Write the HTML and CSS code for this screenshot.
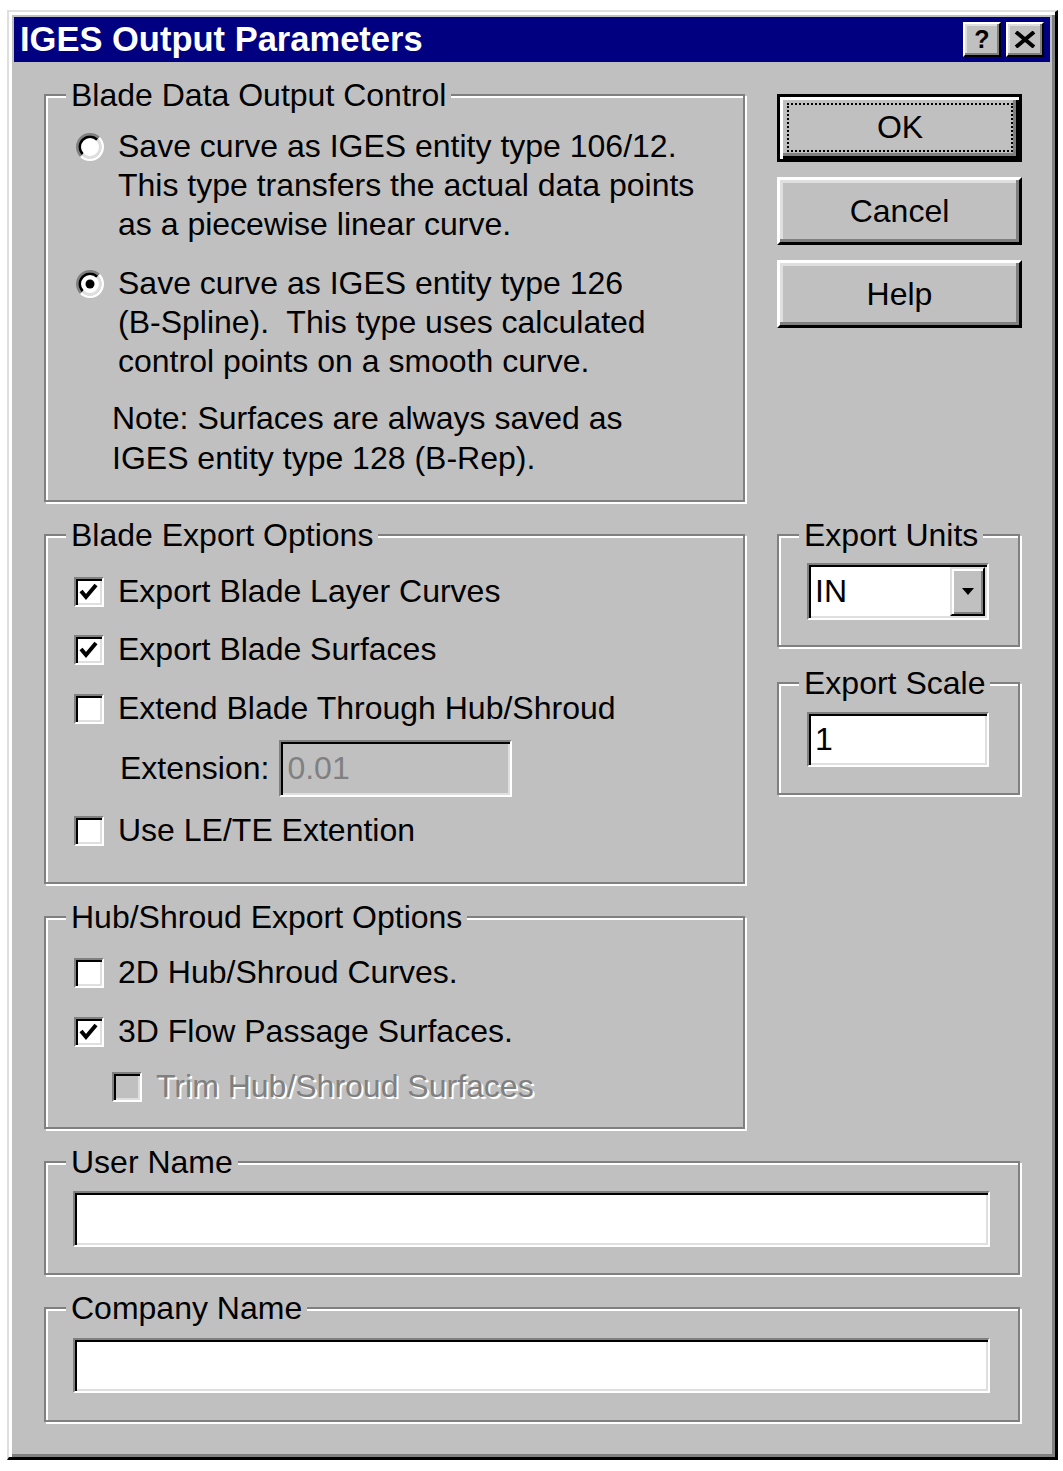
FILE: index.html
```html
<!DOCTYPE html>
<html>
<head>
<meta charset="utf-8">
<title>IGES Output Parameters</title>
<link rel="stylesheet" href="styles.css">
</head>
<body>
<div class="window">
  <div class="titlebar">
    <span class="title">IGES Output Parameters</span>
    <div class="cbtns">
      <div class="cbtn help-q">?</div>
      <div class="cbtn">
        <svg width="22" height="17" viewBox="0 0 22 17"><path d="M2 1 L20 16 M20 1 L2 16" stroke="#000" stroke-width="4" fill="none"/></svg>
      </div>
    </div>
  </div>

  <div class="dlg">
    <div class="top">
      <div class="leftcol">
        <fieldset class="group g1">
          <legend>Blade Data Output Control</legend>
          <div class="g1-content">
            <div class="radio">
              <svg class="rad" width="28" height="28" viewBox="0 0 28 28">
                <circle cx="14" cy="14" r="9.5" fill="#fff"/>
                <path d="M4.98 23.02 A12.75 12.75 0 0 1 23.02 4.98" stroke="#808080" stroke-width="2.5" fill="none"/>
                <path d="M23.02 4.98 A12.75 12.75 0 0 1 4.98 23.02" stroke="#fff" stroke-width="2.5" fill="none"/>
                <path d="M6.75 21.25 A10.25 10.25 0 0 1 21.25 6.75" stroke="#000" stroke-width="2.5" fill="none"/>
                <path d="M21.25 6.75 A10.25 10.25 0 0 1 6.75 21.25" stroke="#dfdfdf" stroke-width="2.5" fill="none"/>
              </svg>
              <span>Save curve as IGES entity type 106/12.<br>This type transfers the actual data points<br>as a piecewise linear curve.</span>
            </div>
            <div class="radio r2">
              <svg class="rad" width="28" height="28" viewBox="0 0 28 28">
                <circle cx="14" cy="14" r="9.5" fill="#fff"/>
                <path d="M4.98 23.02 A12.75 12.75 0 0 1 23.02 4.98" stroke="#808080" stroke-width="2.5" fill="none"/>
                <path d="M23.02 4.98 A12.75 12.75 0 0 1 4.98 23.02" stroke="#fff" stroke-width="2.5" fill="none"/>
                <path d="M6.75 21.25 A10.25 10.25 0 0 1 21.25 6.75" stroke="#000" stroke-width="2.5" fill="none"/>
                <path d="M21.25 6.75 A10.25 10.25 0 0 1 6.75 21.25" stroke="#dfdfdf" stroke-width="2.5" fill="none"/>
                <circle cx="14" cy="14" r="4.5" fill="#000"/>
              </svg>
              <span>Save curve as IGES entity type 126<br>(B-Spline).&nbsp; This type uses calculated<br>control points on a smooth curve.</span>
            </div>
            <p class="note">Note: Surfaces are always saved as<br>IGES entity type 128 (B-Rep).</p>
          </div>
        </fieldset>

        <fieldset class="group g2">
          <legend>Blade Export Options</legend>
          <div class="g2-content">
            <div class="check">
              <span class="cb"><svg width="26" height="26" viewBox="0 0 26 26"><polyline points="5,12 10,18 20,6" stroke="#000" stroke-width="4" fill="none"/></svg></span>
              <span>Export Blade Layer Curves</span>
            </div>
            <div class="check">
              <span class="cb"><svg width="26" height="26" viewBox="0 0 26 26"><polyline points="5,12 10,18 20,6" stroke="#000" stroke-width="4" fill="none"/></svg></span>
              <span>Export Blade Surfaces</span>
            </div>
            <div class="check c3">
              <span class="cb"></span>
              <span>Extend Blade Through Hub/Shroud</span>
            </div>
            <div class="ext">
              <span class="ext-label">Extension:</span>
              <div class="sunken ext-input">0.01</div>
            </div>
            <div class="check c5">
              <span class="cb"></span>
              <span>Use LE/TE Extention</span>
            </div>
          </div>
        </fieldset>

        <fieldset class="group g3">
          <legend>Hub/Shroud Export Options</legend>
          <div class="g3-content">
            <div class="check">
              <span class="cb"></span>
              <span>2D Hub/Shroud Curves.</span>
            </div>
            <div class="check h2">
              <span class="cb"><svg width="26" height="26" viewBox="0 0 26 26"><polyline points="5,12 10,18 20,6" stroke="#000" stroke-width="4" fill="none"/></svg></span>
              <span>3D Flow Passage Surfaces.</span>
            </div>
            <div class="check h3 disabled">
              <span class="cb off"></span>
              <span>Trim Hub/Shroud Surfaces</span>
            </div>
          </div>
        </fieldset>
      </div>

      <div class="rightcol">
        <div class="btn default"><span class="focus">OK</span></div>
        <div class="btn">Cancel</div>
        <div class="btn">Help</div>

        <fieldset class="group small units">
          <legend>Export Units</legend>
          <div class="sunken combo">
            <span class="combo-text">IN</span>
            <span class="dd"><svg width="12" height="7" viewBox="0 0 12 7"><path d="M0 0 H12 L6 7 Z" fill="#000"/></svg></span>
          </div>
        </fieldset>

        <fieldset class="group small scale">
          <legend>Export Scale</legend>
          <div class="sunken field">1</div>
        </fieldset>
      </div>
    </div>

    <fieldset class="group wide user">
      <legend>User Name</legend>
      <div class="sunken wide-input"></div>
    </fieldset>

    <fieldset class="group wide company">
      <legend>Company Name</legend>
      <div class="sunken wide-input"></div>
    </fieldset>
  </div>
</div>
</body>
</html>
```

FILE: styles.css
```css
* { box-sizing: border-box; }

html, body {
  margin: 0;
  padding: 0;
  background: #fff;
}

body {
  font-family: "Liberation Sans", Arial, sans-serif;
  font-size: 32px;
  color: #000;
}

.window {
  width: 1051px;
  height: 1450px;
  margin: 10px 0 0 7px;
  background: #c0c0c0;
  border-style: solid;
  border-width: 2px 3px 3px 2px;
  border-color: #dfdfdf #000 #000 #dfdfdf;
  box-shadow: inset 3px 3px 0 #fff, inset -3px -3px 0 #808080;
  padding: 5px;
  display: flex;
  flex-direction: column;
}

/* title bar */
.titlebar {
  height: 45px;
  flex: none;
  background: #000080;
  color: #fff;
  display: flex;
  align-items: center;
  padding: 0 6px 0 6px;
}

.title {
  flex: 1;
  font-weight: bold;
  font-size: 34.5px;
  line-height: 45px;
  white-space: nowrap;
}

.cbtns {
  display: flex;
  gap: 5px;
}

.cbtn {
  width: 38px;
  height: 35px;
  background: #c0c0c0;
  border: 2px solid;
  border-color: #fff #000 #000 #fff;
  box-shadow: inset -2px -2px 0 #808080, inset 2px 2px 0 #dfdfdf;
  display: flex;
  align-items: center;
  justify-content: center;
  color: #000;
}

.help-q {
  font-weight: bold;
  font-size: 25px;
  line-height: 1;
}

/* dialog body */
.dlg {
  flex: 1;
  padding: 15px 0 0 30px;
  display: flex;
  flex-direction: column;
  gap: 15px;
}

.top {
  display: flex;
  gap: 32px;
}

.leftcol {
  width: 701px;
  display: flex;
  flex-direction: column;
  gap: 15px;
}

.rightcol {
  width: 245px;
  display: flex;
  flex-direction: column;
}

/* group boxes */
fieldset.group {
  margin: 0;
  padding: 0;
  min-width: 0;
  border: 2px solid #808080;
  box-shadow: inset 2px 2px 0 #fff, 2px 2px 0 #fff;
}

fieldset.group legend {
  margin-left: 20px;
  padding: 0 5px;
  line-height: 36px;
  font-size: 32px;
  background: #c0c0c0;
  white-space: nowrap;
}

.g1 { height: 425px; }
.g2 { height: 367px; }
.g3 { height: 230px; }

.g1-content {
  padding: 14px 0 0 30px;
}

.radio {
  display: flex;
  gap: 14px;
  line-height: 39px;
}

.radio .rad {
  flex: none;
  margin-top: 6px;
}

.r2 { margin-top: 20px; }

.note {
  margin: 17px 0 0 36px;
  line-height: 40px;
}

.g2-content {
  padding: 19px 0 0 28px;
  display: flex;
  flex-direction: column;
}

.check {
  display: flex;
  align-items: center;
  gap: 14px;
  line-height: 39px;
  height: 39px;
}

.check + .check { margin-top: 19px; }
.check.c3 { margin-top: 20px; }
.check.c5 { margin-top: 14px; }

.cb {
  flex: none;
  width: 30px;
  height: 30px;
  background: #fff;
  border: 2px solid;
  border-color: #808080 #fff #fff #808080;
  box-shadow: inset 2px 2px 0 #000, inset -2px -2px 0 #dfdfdf;
  display: block;
}

.cb svg { display: block; }

.cb.off { background: #c0c0c0; }

.ext {
  display: flex;
  align-items: center;
  margin: 12px 0 0 46px;
  gap: 10px;
}

.ext-label { line-height: 39px; }

.sunken {
  border: 2px solid;
  border-color: #808080 #fff #fff #808080;
  box-shadow: inset 2px 2px 0 #000, inset -2px -2px 0 #dfdfdf;
  background: #fff;
}

.ext-input {
  width: 233px;
  height: 57px;
  background: #c0c0c0;
  color: #808080;
  padding-left: 6px;
  line-height: 53px;
}

.g3-content {
  padding: 18px 0 0 28px;
  display: flex;
  flex-direction: column;
}

.check.h2 { margin-top: 20px; }
.check.h3 { margin-top: 16px; margin-left: 38px; }

.disabled span:last-child {
  color: #808080;
  text-shadow: 2px 2px 0 #fff;
}

/* buttons */
.btn {
  width: 245px;
  height: 68px;
  background: #c0c0c0;
  border: 3px solid;
  border-color: #fff #000 #000 #fff;
  box-shadow: inset -3px -3px 0 #808080, inset 3px 3px 0 #dfdfdf;
  display: flex;
  align-items: center;
  justify-content: center;
  margin-top: 15px;
}

.btn.default {
  margin-top: 17px;
  border-color: #000;
  box-shadow: inset 3px 3px 0 #fff, inset -3px -3px 0 #000, inset -6px -6px 0 #808080;
  padding: 6px 6px 7px 7px;
  align-items: stretch;
}

.focus {
  flex: 1;
  border: 2px dotted #000;
  display: flex;
  align-items: center;
  justify-content: center;
}

fieldset.small {
  width: 243px;
  height: 130px;
}

fieldset.units { margin-top: 189px; }
fieldset.scale { margin-top: 18px; }

.combo {
  width: 182px;
  height: 57px;
  margin: 10px 0 0 28px;
  padding: 2px;
  display: flex;
}

.combo-text {
  flex: 1;
  padding-left: 4px;
  line-height: 49px;
}

.dd {
  width: 35px;
  background: #c0c0c0;
  border: 2px solid;
  border-color: #dfdfdf #000 #000 #dfdfdf;
  box-shadow: inset 2px 2px 0 #fff, inset -2px -2px 0 #808080;
  display: flex;
  align-items: center;
  justify-content: center;
}

.dd svg { display: block; }

.field {
  width: 182px;
  height: 55px;
  margin: 11px 0 0 28px;
  padding-left: 6px;
  line-height: 51px;
}

fieldset.wide {
  width: 976px;
}

.user { height: 131px; }
.company { height: 132px; }

.wide-input {
  width: 917px;
  height: 56px;
  margin: 11px 0 0 27px;
}

.company .wide-input { margin-top: 12px; height: 55px; }
```
